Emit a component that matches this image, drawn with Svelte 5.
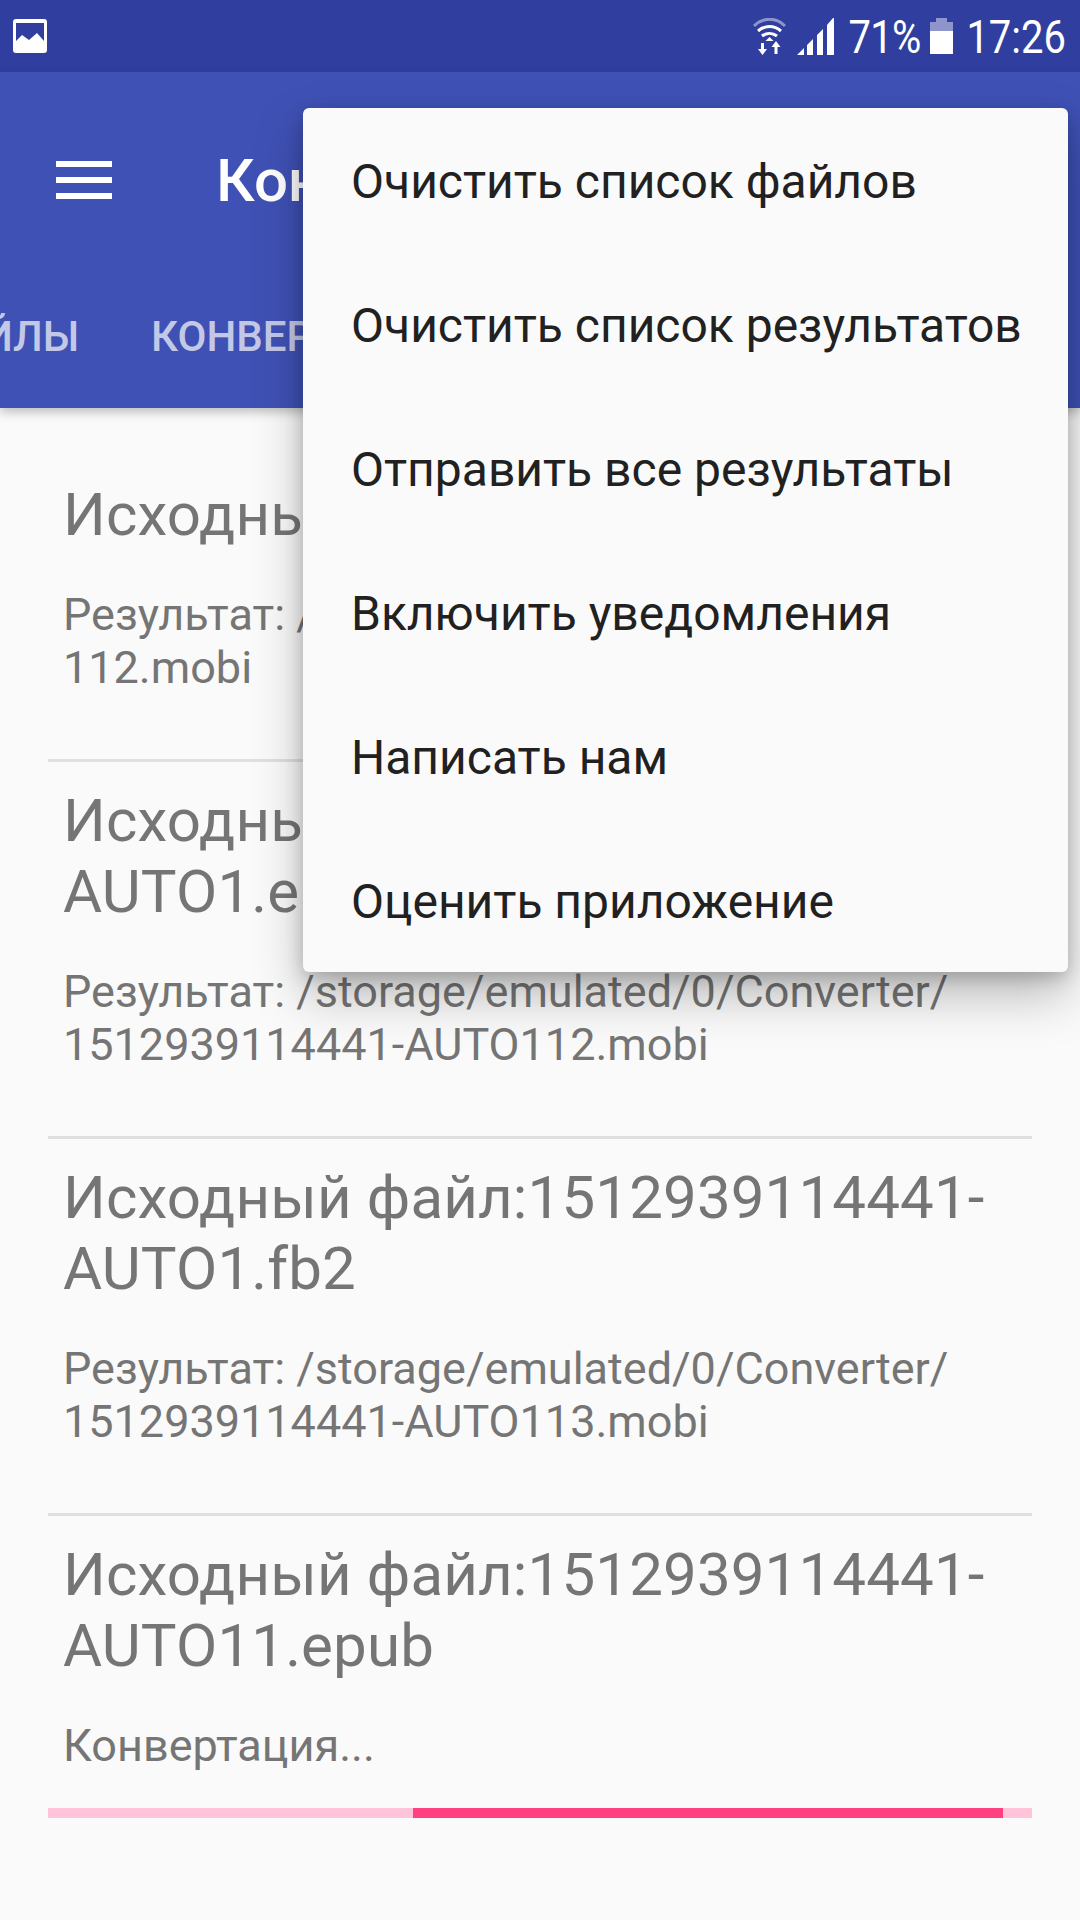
<script>
	const results = [
		{ title: ['Исходный файл:AUTO1.epub'], result: ['Результат: /storage/emulated/0/Converter/AUTO', '112.mobi'], gap: 'first' },
		{ title: ['Исходный файл:1512939114441-', 'AUTO1.epub'], result: ['Результат: /storage/emulated/0/Converter/', '1512939114441-AUTO112.mobi'] },
		{ title: ['Исходный файл:1512939114441-', 'AUTO1.fb2'], result: ['Результат: /storage/emulated/0/Converter/', '1512939114441-AUTO113.mobi'] },
	];
	const menu = [
		'Очистить список файлов',
		'Очистить список результатов',
		'Отправить все результаты',
		'Включить уведомления',
		'Написать нам',
		'Оценить приложение',
	];
</script>

<div class="screen">
	<div class="status">
		<svg class="pic" viewBox="0 0 34 34" width="34" height="34">
			<path fill="#fff" fill-rule="evenodd" d="M3 0h28a3 3 0 0 1 3 3v28a3 3 0 0 1-3 3H3a3 3 0 0 1-3-3V3a3 3 0 0 1 3-3zM3 4v18l6-6 7 5 8-7 7 8V4z" />
		</svg>
		<span class="grow"></span>
		<svg class="wifi" viewBox="0 0 33 37" width="33" height="37">
			<path d="M1 8C10-1 23-1 32 8" fill="none" stroke="#fff" stroke-opacity="0.45" stroke-width="3" />
			<path d="M5 13c7-6 16-6 23 0M9 18c4.500-3.500 10.500-3.500 15 0" fill="none" stroke="#fff" stroke-width="3" />
			<path fill="#fff" d="M16.500 19l4 4h-8zM8 25h3v6h3l-4.500 6L5 31h3zM23 23l4.500 6h-3v7h-3v-7h-3z" />
		</svg>
		<svg class="signal" viewBox="0 0 37 37" width="37" height="37">
			<path fill="#fff" d="M0 37l7-7v7zM10 37V27l6-6v16zM20 37V17l6-6v26zM30 37V7l6-7h1v37z" />
		</svg>
		<span class="stat pct">71%</span>
		<svg class="batt" viewBox="0 0 23 36" width="23" height="36">
			<path fill="#fff" fill-opacity="0.45" d="M0 4h6V0h11v4h6v9H0z" />
			<rect y="13" width="23" height="23" fill="#fff" />
		</svg>
		<span class="stat time">17:26</span>
	</div>

	<header class="appbar">
		<div class="toolbar">
			<div class="burger"><i></i><i></i><i></i></div>
			<span class="title">Конвертер</span>
		</div>
		<div class="tabs">
			<span class="tab">ФАЙЛЫ</span>
			<span class="tab">КОНВЕРТАЦИЯ</span>
		</div>
	</header>

	<main class="list">
		{#each results as r}
			<section class="item" class:first={r.gap === 'first'}>
				<h2>{#each r.title as line}<span>{line}</span>{/each}</h2>
				<p>{#each r.result as line}<span>{line}</span>{/each}</p>
			</section>
		{/each}
		<section class="item last">
			<h2><span>Исходный файл:1512939114441-</span><span>AUTO11.epub</span></h2>
			<p><span>Конвертация...</span></p>
			<div class="progress"><div class="bar"></div></div>
		</section>
	</main>

	<nav class="menu">
		{#each menu as label}
			<div class="menu-item">{label}</div>
		{/each}
	</nav>
</div>

<style>
	:global(body) {
		margin: 0;
		background: #fafafa;
	}
	.screen {
		position: relative;
		width: 1080px;
		height: 1920px;
		overflow: hidden;
		background: #fafafa;
		font-family: Roboto, 'Noto Sans', sans-serif;
	}
	.status {
		height: 72px;
		display: flex;
		align-items: center;
		background: #303f9f;
		padding: 0 14px 0 13px;
		box-sizing: border-box;
		color: #fff;
	}
	.grow {
		flex: 1;
	}
	.stat {
		font-size: 40px;
		line-height: 72px;
		margin-top: 3px;
		transform: scaleY(1.14);
	}
	.pct {
		letter-spacing: -0.8px;
	}
	.wifi {
		margin-right: 11px;
	}
	.signal {
		margin-right: 15px;
	}
	.batt {
		margin: 0 13px 0 10px;
	}
	.appbar {
		height: 336px;
		background: #3f51b5;
		box-shadow: 0 4px 10px rgba(0, 0, 0, 0.25);
		position: relative;
		overflow: hidden;
	}
	.toolbar {
		height: 216px;
		display: flex;
		align-items: center;
		padding-left: 56px;
	}
	.burger {
		width: 56px;
		display: flex;
		flex-direction: column;
		gap: 10px;
		margin-right: 104px;
	}
	.burger i {
		display: block;
		height: 6px;
		background: #fff;
	}
	.title {
		font-size: 60px;
		font-weight: 500;
		color: #fff;
	}
	.tabs {
		display: flex;
		gap: 72px;
		margin-left: -78px;
		margin-top: 24px;
		white-space: nowrap;
	}
	.tab {
		font-size: 42px;
		font-weight: 500;
		color: rgba(255, 255, 255, 0.7);
	}
	.list {
		padding: 0 48px;
	}
	.item {
		height: 377px;
		box-sizing: border-box;
		border-bottom: 3px solid #e0e0e0;
		color: #757575;
		padding: 23px 16px 0 15px;
	}
	.item.first {
		height: 354px;
		padding-top: 71px;
	}
	.item.last {
		border-bottom: 0;
	}
	h2 {
		margin: 0;
		font-size: 60px;
		letter-spacing: 0.15px;
		font-weight: 400;
		line-height: 71px;
	}
	p {
		margin: 38px 0 0;
		font-size: 45px;
		line-height: 53px;
	}
	h2 span,
	p span {
		display: block;
		white-space: nowrap;
	}
	.progress {
		height: 10px;
		margin: 36px -16px 0 -15px;
		background: #ffc4d9;
		display: flex;
		padding-left: 365px;
		padding-right: 29px;
	}
	.bar {
		flex: 1;
		background: #ff4081;
	}
	.menu {
		position: absolute;
		left: 303px;
		top: 108px;
		width: 765px;
		background: #fafafa;
		border-radius: 6px;
		box-shadow: 0 24px 50px rgba(0, 0, 0, 0.25), 0 6px 18px rgba(0, 0, 0, 0.2);
	}
	.menu-item {
		height: 144px;
		display: flex;
		align-items: center;
		padding: 2px 0 0 48px;
		box-sizing: border-box;
		font-size: 48px;
		color: #212121;
		white-space: nowrap;
	}
</style>
